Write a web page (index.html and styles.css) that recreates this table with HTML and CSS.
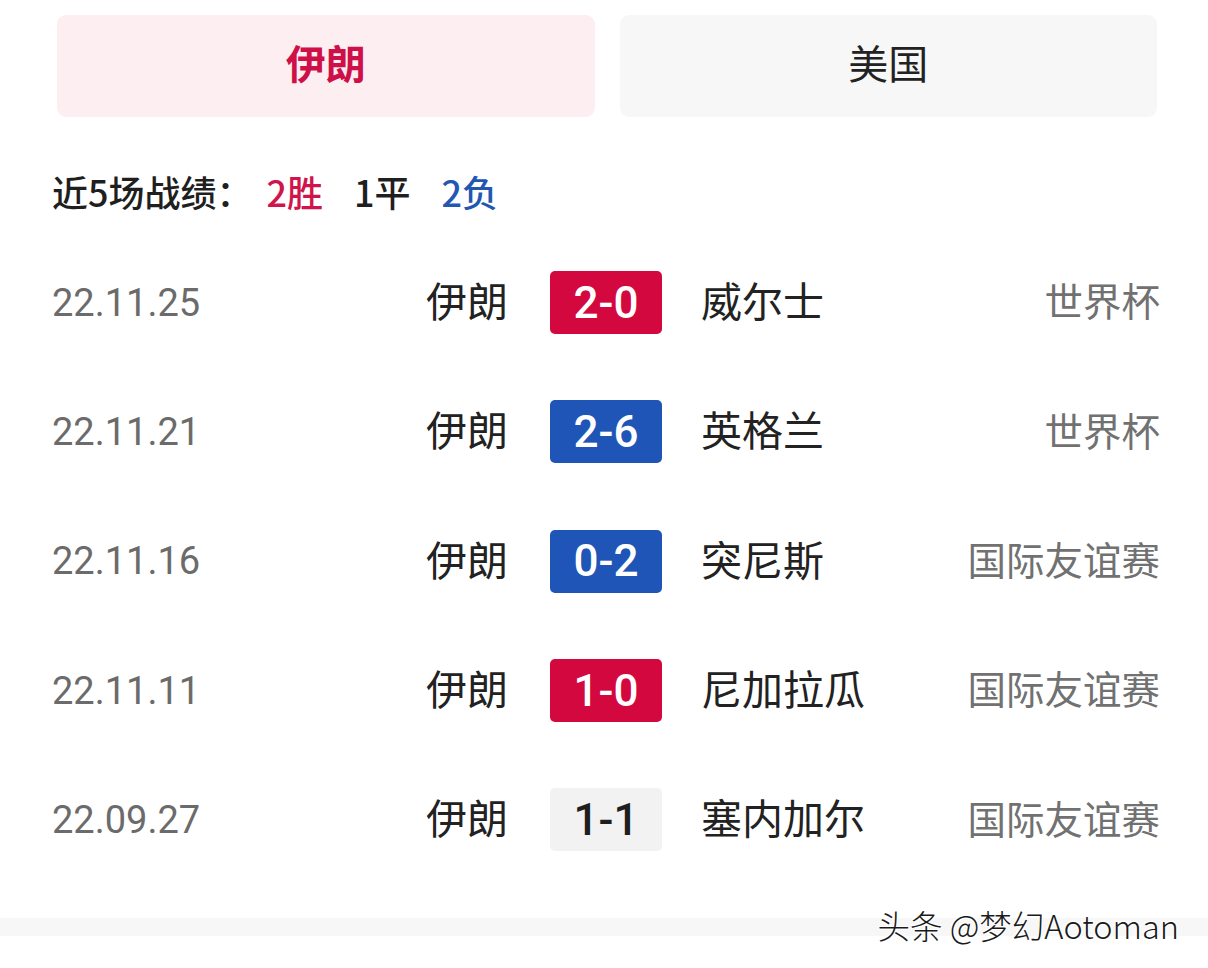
FILE: index.html
```html
<!DOCTYPE html>
<html lang="zh">
<head>
<meta charset="utf-8">
<title>近5场战绩</title>
<link rel="stylesheet" href="styles.css">
</head>
<body>
<div class="page">
  <div class="tabs">
    <div class="tab tab-active"><span class="tab-label">伊朗</span></div>
    <div class="tab"><span class="tab-label">美国</span></div>
  </div>
  <div class="summary">
    <span class="summary-label">近5场战绩：</span>
    <span class="stat stat-win">2胜</span>
    <span class="stat stat-draw">1平</span>
    <span class="stat stat-loss">2负</span>
  </div>
  <div class="matches">
    <div class="match">
      <div class="side side-left"><span class="date">22.11.25</span><span class="team">伊朗</span></div>
      <div class="score score-win">2-0</div>
      <div class="side side-right"><span class="team">威尔士</span><span class="comp">世界杯</span></div>
    </div>
    <div class="match">
      <div class="side side-left"><span class="date">22.11.21</span><span class="team">伊朗</span></div>
      <div class="score score-loss">2-6</div>
      <div class="side side-right"><span class="team">英格兰</span><span class="comp">世界杯</span></div>
    </div>
    <div class="match">
      <div class="side side-left"><span class="date">22.11.16</span><span class="team">伊朗</span></div>
      <div class="score score-loss">0-2</div>
      <div class="side side-right"><span class="team">突尼斯</span><span class="comp">国际友谊赛</span></div>
    </div>
    <div class="match">
      <div class="side side-left"><span class="date">22.11.11</span><span class="team">伊朗</span></div>
      <div class="score score-win">1-0</div>
      <div class="side side-right"><span class="team">尼加拉瓜</span><span class="comp">国际友谊赛</span></div>
    </div>
    <div class="match">
      <div class="side side-left"><span class="date">22.09.27</span><span class="team">伊朗</span></div>
      <div class="score score-draw">1-1</div>
      <div class="side side-right"><span class="team">塞内加尔</span><span class="comp">国际友谊赛</span></div>
    </div>
  </div>
</div>
<div class="footer">
  <div class="band"></div>
  <div class="watermark">头条 @梦幻Aotoman</div>
</div>
</body>
</html>
```

FILE: styles.css
```css
html, body {
  margin: 0;
  padding: 0;
  background: #ffffff;
}
body {
  width: 1208px;
  height: 968px;
  overflow: hidden;
  font-family: "Noto Sans CJK SC", "Noto Sans", sans-serif;
  color: #222222;
}
.page {
  padding: 15px 48px 0 52px;
}
.tabs {
  display: grid;
  grid-template-columns: 1fr 1fr;
  column-gap: 25px;
  margin: 0 3px 0 5px;
}
.tab {
  height: 102px;
  border-radius: 9px;
  background: #f7f7f7;
  display: flex;
  align-items: center;
  justify-content: center;
  font-size: 40px;
  color: #222222;
  line-height: 1;
}
.tab-label {
  padding-bottom: 8px;
}
.tab-active {
  background: #fdeef2;
  color: #cf0f48;
  font-weight: 700;
}
.summary {
  margin-top: 50px;
  height: 48px;
  display: flex;
  align-items: center;
  font-size: 36px;
  font-weight: 500;
  line-height: 48px;
  color: #1f1f1f;
}
.summary-label {
  margin-right: 14px;
}
.stat {
  margin-right: 31px;
}
.stat-win { color: #cf154c; }
.stat-draw { color: #1f1f1f; }
.stat-loss { color: #2357b2; }
.matches {
  margin-top: 23px;
}
.match {
  display: grid;
  grid-template-columns: 1fr 112px 1fr;
  column-gap: 41px;
  align-items: center;
  height: 129.3px;
}
.side {
  display: flex;
  align-items: center;
  justify-content: space-between;
  line-height: 1;
}
.date {
  font-family: Roboto, "Noto Sans", sans-serif;
  font-size: 38px;
  color: #6b6b6b;
}
.team {
  font-size: 41px;
  color: #222222;
  padding-bottom: 6px;
}
.side-left .team {
  margin-right: 1px;
}
.side-right .team {
  margin-left: -2px;
}
.comp {
  font-size: 38.5px;
  color: #717171;
  padding-bottom: 6px;
}
.score {
  height: 63px;
  border-radius: 5px;
  display: flex;
  align-items: center;
  justify-content: center;
  font-family: Roboto, "Noto Sans", sans-serif;
  font-size: 44px;
  font-weight: 500;
  color: #ffffff;
  line-height: 1;
}
.score-win { background: #d3083f; }
.score-loss { background: #1f55b6; }
.score-draw { background: #f2f2f2; color: #1e1e1e; }
.footer {
  position: relative;
  margin-top: 34px;
}
.band {
  height: 18px;
  background: #f7f7f7;
}
.watermark {
  position: absolute;
  right: 29px;
  top: -12px;
  font-size: 32.5px;
  font-weight: 300;
  line-height: 38px;
  color: #1a1a1a;
  text-shadow: 1px 1px 0 #ffffff, -1px -1px 0 #ffffff, 1px -1px 0 #ffffff, -1px 1px 0 #ffffff;
}
```
